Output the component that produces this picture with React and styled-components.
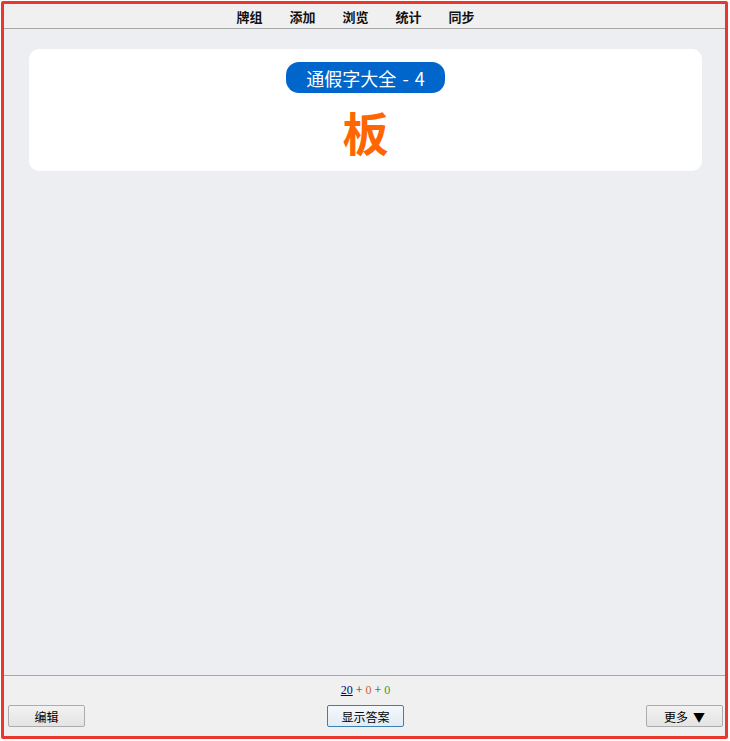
import React from "react";
import styled, { createGlobalStyle } from "styled-components";

const GlobalStyle = createGlobalStyle`
  html, body {
    margin: 0;
    padding: 0;
    background: #ffffff;
  }
  body {
    font-family: "Noto Sans CJK SC", "Liberation Sans", sans-serif;
  }
`;

const Frame = styled.div`
  box-sizing: border-box;
  margin: 1px 2px 2px 1px;
  height: calc(100vh - 3px);
  border: 3px solid #e8382d;
  border-radius: 2px;
  display: flex;
  flex-direction: column;
  overflow: hidden;
`;

const TopBar = styled.nav`
  height: 24px;
  padding-right: 18px;
  background: #f0f0f0;
  border-bottom: 1px solid #a8a8a8;
  display: flex;
  justify-content: center;
  align-items: center;
  gap: 27px;
`;

const NavItem = styled.a`
  font-size: 13px;
  font-weight: bold;
  color: #111;
  text-decoration: none;
  line-height: 1;
`;

const Main = styled.main`
  flex: 1;
  background: #edeef1;
  padding: 20px 23px 0 25px;
`;

const Card = styled.section`
  background: #ffffff;
  border-radius: 10px;
  padding: 13px 0 12px;
  display: flex;
  flex-direction: column;
  align-items: center;
`;

const Badge = styled.div`
  background: #0066cc;
  color: #ffffff;
  border-radius: 13px;
  height: 31px;
  padding: 0 20px;
  display: flex;
  align-items: center;
  font-size: 18px;
  word-spacing: 2px;
`;

const Word = styled.div`
  margin-top: 10px;
  color: #ff6600;
  font-size: 46px;
  font-weight: bold;
  line-height: 56px;
`;

const BottomBar = styled.footer`
  background: #f0f0f0;
  border-top: 1px solid #a8a8a8;
  padding: 6px 2px 9px 4px;
  display: flex;
  flex-direction: column;
`;

const Counts = styled.div`
  text-align: center;
  font-size: 12px;
  line-height: 16px;
  color: #333;
  font-family: "Liberation Serif", serif;
`;

const Count = styled.span`
  color: ${(p) => p.$color};
  text-decoration: ${(p) => (p.$link ? "underline" : "none")};
`;

const Buttons = styled.div`
  margin-top: 7px;
  display: flex;
  justify-content: space-between;
  align-items: center;
`;

const Button = styled.button`
  box-sizing: border-box;
  width: 77px;
  height: 22px;
  padding: 0;
  font-family: "Noto Sans CJK SC", sans-serif;
  font-size: 12px;
  color: #000;
  border-radius: 2px;
  border: 1px solid ${(p) => (p.$primary ? "#3c7fb1" : "#acacac")};
  background: ${(p) =>
    p.$primary
      ? "linear-gradient(#f4f8fb, #e1ecf5)"
      : "linear-gradient(#f2f2f2, #e3e3e3)"};
`;

const Arrow = styled.span`
  margin-left: 5px;
`;

export default function App() {
  return (
    <>
      <GlobalStyle />
      <Frame>
        <TopBar>
          <NavItem>牌组</NavItem>
          <NavItem>添加</NavItem>
          <NavItem>浏览</NavItem>
          <NavItem>统计</NavItem>
          <NavItem>同步</NavItem>
        </TopBar>
        <Main>
          <Card>
            <Badge>通假字大全 - 4</Badge>
            <Word>板</Word>
          </Card>
        </Main>
        <BottomBar>
          <Counts>
            <Count $color="#000080" $link>20</Count> + <Count $color="#c8642a">0</Count> +{" "}
            <Count $color="#33a033">0</Count>
          </Counts>
          <Buttons>
            <Button>编辑</Button>
            <Button $primary>显示答案</Button>
            <Button>
              更多<Arrow>▼</Arrow>
            </Button>
          </Buttons>
        </BottomBar>
      </Frame>
    </>
  );
}
